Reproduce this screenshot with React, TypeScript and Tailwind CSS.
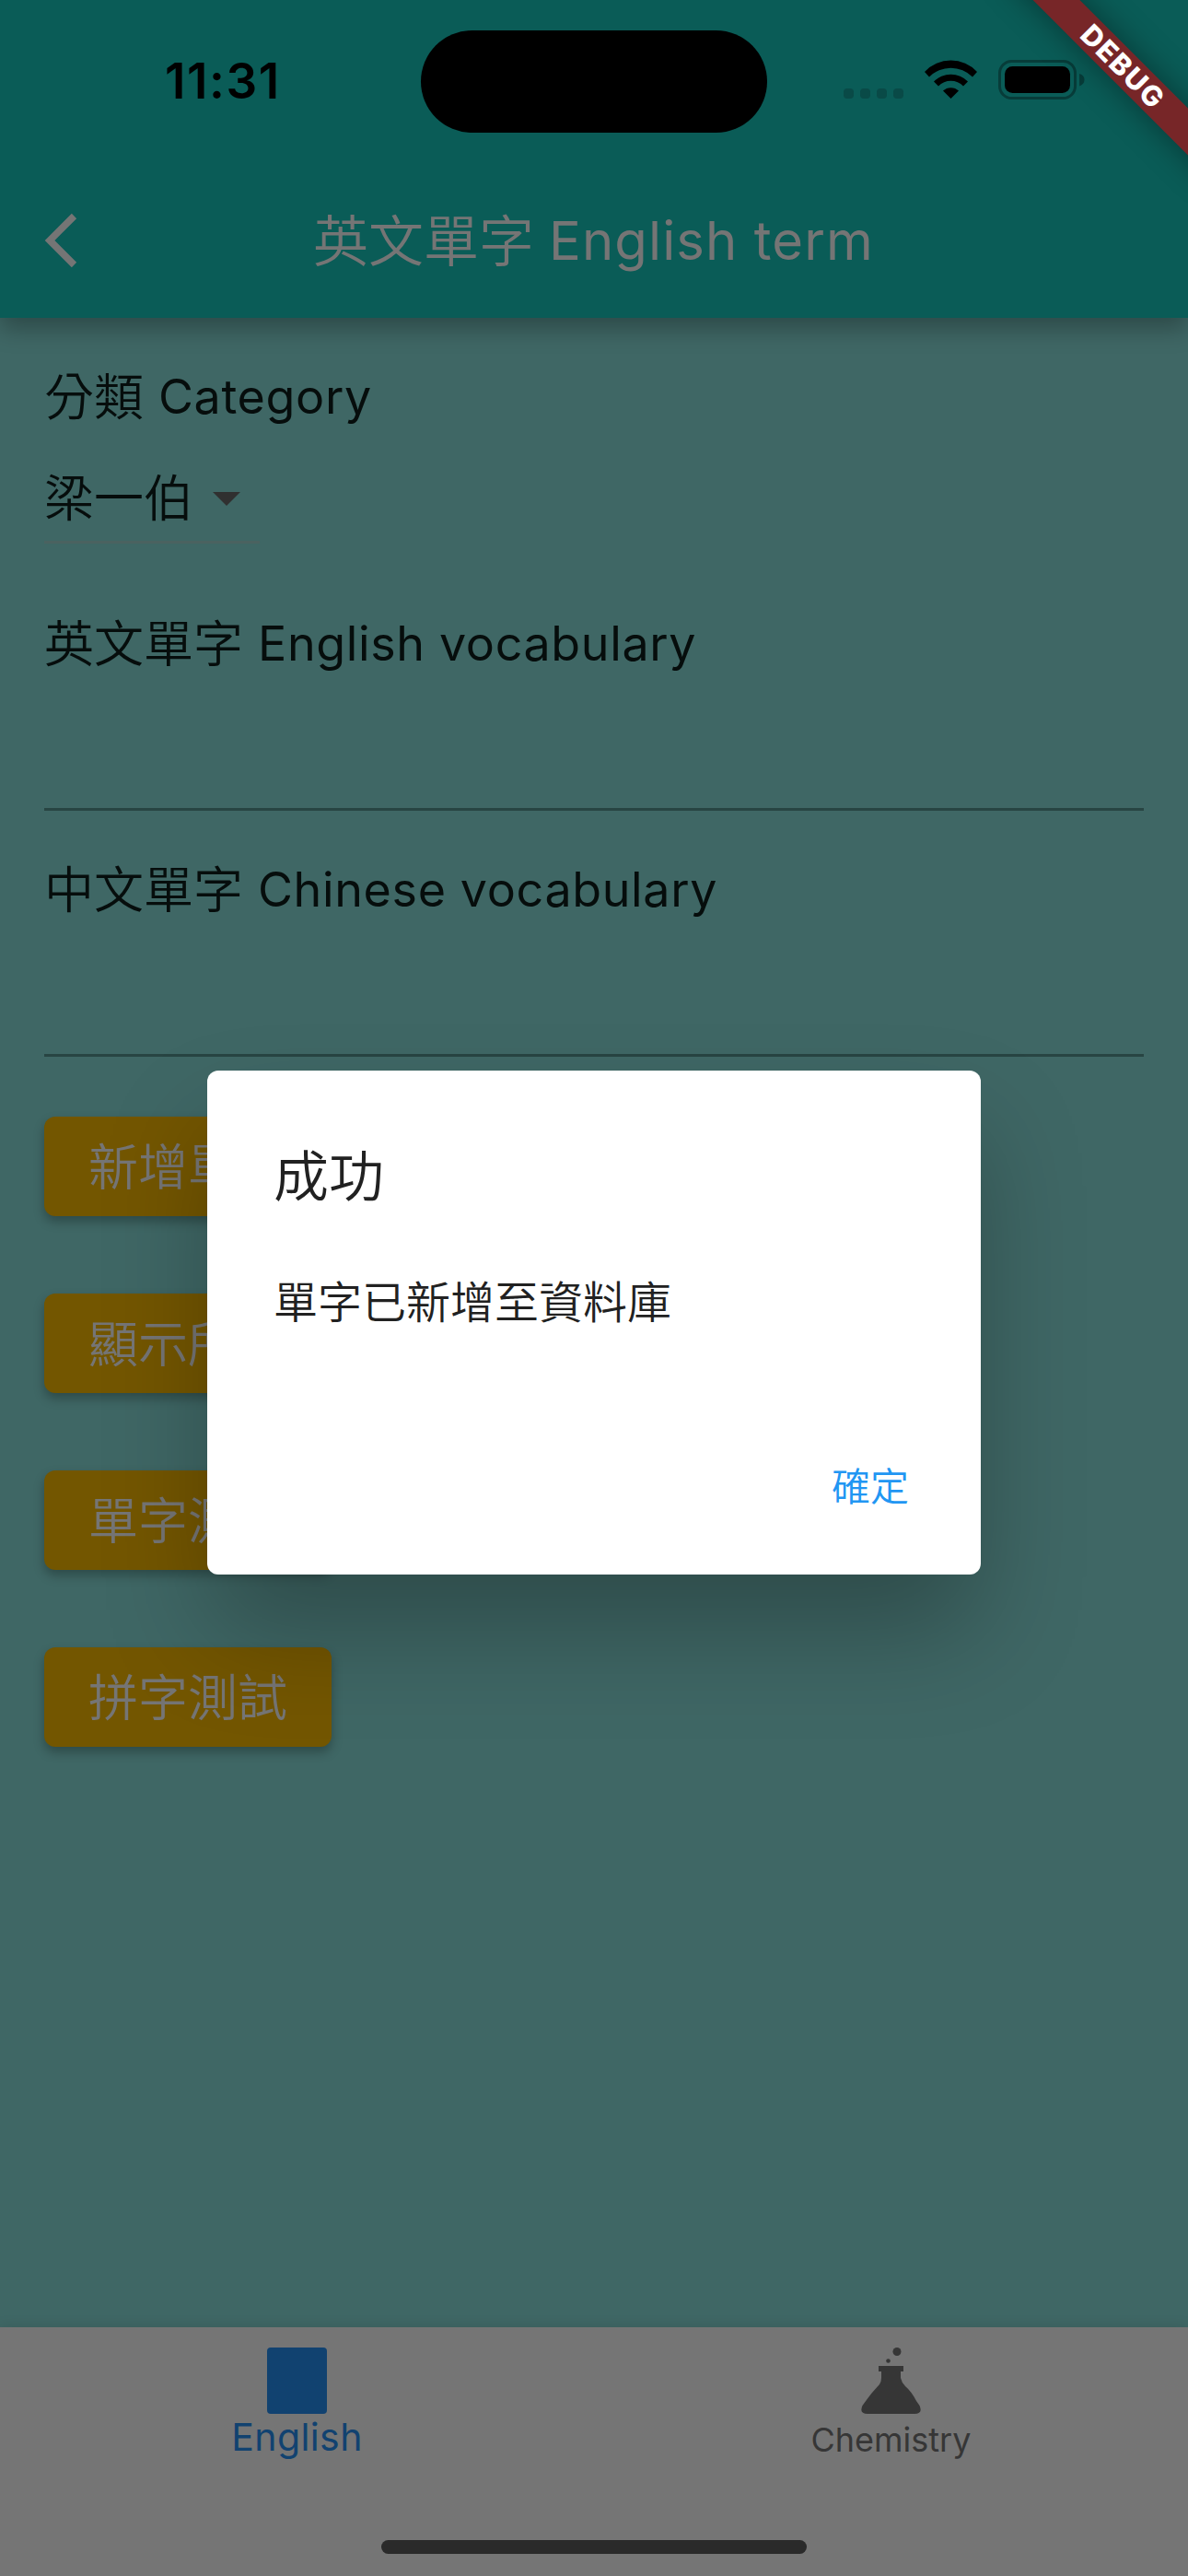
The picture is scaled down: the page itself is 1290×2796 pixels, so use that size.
import type { ReactNode } from "react";

function En({ children, className = "" }: { children: ReactNode; className?: string }) {
  return <span className={`font-['Inter'] font-[370] ${className}`}>{children}</span>;
}

function Zh({ children }: { children: ReactNode }) {
  return <span className="pb-[7px]">{children}</span>;
}

function StatusBar() {
  return (
    <div className="relative h-[177px] shrink-0">
      <span className="absolute left-[179px] top-[56px] font-['Inter'] text-[53px] font-semibold leading-[65px] tracking-[1.6px] text-black">11:31</span>
      <div className="absolute left-[457px] top-[33px] h-[111px] w-[376px] rounded-full bg-black" />
      <svg className="absolute left-[910px] top-[60px]" width="280" height="54" viewBox="0 0 280 54">
        <g fill="#094a47">
          <rect x="6" y="36" width="11" height="11" rx="4" />
          <rect x="24" y="36" width="11" height="11" rx="4" />
          <rect x="42" y="36" width="11" height="11" rx="4" />
          <rect x="60" y="36" width="11" height="11" rx="4" />
        </g>
        <path d="M94 18 A39 39 0 0 1 151 18 L146 23.500 A33 33 0 0 0 99 23.500 Z" fill="#000" />
        <path d="M104 28.500 A26 26 0 0 1 141 28.500 L136 33.500 A19 19 0 0 0 109 33.500 Z" fill="#000" />
        <path d="M114 38.500 A12.500 12.500 0 0 1 131 38.500 L122.500 47 Z" fill="#000" />
        <rect x="175.500" y="6.500" width="82" height="40" rx="13" fill="none" stroke="#073c39" strokeWidth="3" />
        <rect x="181" y="12" width="71" height="29" rx="8.500" fill="#000" />
        <path d="M262 20 Q267.500 21.500 267.500 26.500 Q267.500 31.500 262 33.500 Z" fill="#073c39" />
      </svg>
    </div>
  );
}

function DebugBanner() {
  return (
    <div className="absolute right-0 top-0 z-30 h-[230px] w-[260px] overflow-hidden">
      <div className="absolute left-[28px] top-[53px] flex h-[36px] w-[320px] rotate-45 items-center justify-center bg-[#772628] shadow-[0_0_34px_rgba(0,0,0,0.4)]">
        <span className="pl-[4px] font-['Inter'] text-[30.600px] font-extrabold leading-none tracking-[1.600px] text-white">DEBUG</span>
      </div>
    </div>
  );
}

function Field({ zh, en }: { zh: string; en: string }) {
  return (
    <div className="h-[267px] border-b-[3px] border-[#284543] pt-[50px]">
      <div className="flex h-[72px] items-center whitespace-pre">
        <Zh>{zh}</Zh>
        <En className="ml-[16px] text-[52px] tracking-[0.640px]">{en}</En>
      </div>
    </div>
  );
}

const actions = ["新增單字", "顯示所有", "單字測試", "拼字測試"];

export default function App() {
  return (
    <div className="relative flex h-[2796px] w-[1290px] flex-col overflow-hidden bg-[#3f6765] font-['Noto_Sans_CJK_TC',sans-serif] font-[350]">
      <header className="relative z-10 flex h-[345px] shrink-0 flex-col bg-[#0a5c57] shadow-[0_12px_24px_rgba(0,0,0,0.28)]">
        <StatusBar />
        <div className="flex h-[168px] items-center">
          <svg className="ml-[48px]" width="36" height="60" viewBox="0 0 36 60" fill="none" stroke="#757575" strokeWidth="7.500">
            <path d="M32.500 3.500 L6 30 L32.500 56.500" />
          </svg>
          <h1 className="ml-[256px] flex h-[84px] items-center whitespace-pre text-[60px] text-[#757575]">
            <Zh>英文單字</Zh>
            <En className="ml-[16px] text-[58px] tracking-[1.100px]">English term</En>
          </h1>
        </div>
      </header>

      <main className="flex flex-1 flex-col px-[48px] text-[54px] text-[#060d0c]">
        <div className="mt-[50px] flex h-[72px] items-center">
          <Zh>分類</Zh>
          <En className="ml-[16px] text-[52px] tracking-[0.640px]">Category</En>
        </div>
        <div className="mt-[24px] flex h-[99px] w-[234px] items-center border-b-[3px] border-[#4a6260] pt-[4px]">
          <Zh>梁一伯</Zh>
          <svg className="ml-[21px]" width="30" height="15" viewBox="0 0 30 15"><path d="M0 0H30L15 15Z" fill="#303030" /></svg>
        </div>
        <div className="mt-[23px]">
          <Field zh="英文單字" en="English vocabulary" />
          <Field zh="中文單字" en="Chinese vocabulary" />
        </div>
        <div className="mt-[65px] flex flex-col items-start gap-[84px]">
          {actions.map((label) => (
            <button key={label} className="flex h-[108px] w-[312px] items-center justify-center whitespace-nowrap rounded-[12px] bg-[#735600] pb-[5px] text-[54px] text-[#757575] shadow-[0_6px_12px_rgba(0,0,0,0.28)]">
              {label}
            </button>
          ))}
        </div>
      </main>

      <nav className="relative flex h-[270px] shrink-0 bg-[#757575] shadow-[0_-3px_12px_rgba(0,0,0,0.08)]">
        <div className="flex flex-1 flex-col items-center pt-[22px] text-[#114270]">
          <div className="h-[72px] w-[65px] rounded-[4px] bg-[#114270]" />
          <En className="text-[41px] leading-[50px] tracking-[0.400px]">English</En>
        </div>
        <div className="flex flex-1 flex-col items-center pt-[22px] text-[#363636]">
          <svg width="65" height="72" viewBox="0 0 65 72" fill="#363636">
            <circle cx="39" cy="4.500" r="4.500" />
            <circle cx="29.500" cy="14.500" r="2.300" />
            <path d="M19 20H46V26H43V33Q44 38 48 42Q55 48 60 58L63.500 63Q67.500 72 58 72H7Q-2.500 72 1.500 63Q8 54 12 49L20 40Q22 37 22 33V26H19Z" />
          </svg>
          <En className="mt-[6px] text-[36px] leading-[44px]">Chemistry</En>
        </div>
        <div className="absolute left-[414px] top-[231px] h-[15px] w-[462px] rounded-full bg-[#2a2a2a]" />
      </nav>

      <section role="dialog" className="absolute left-[225px] top-[1162px] z-20 flex h-[547px] w-[840px] flex-col rounded-[12px] bg-white px-[72px] text-[#212121] shadow-[0_64px_116px_-6px_rgba(0,0,0,0.27)]">
        <h2 className="mt-[69px] h-[84px] text-[60px] leading-[84px]">成功</h2>
        <p className="mt-[59px] h-[72px] text-[48px] leading-[72px]">單字已新增至資料庫</p>
        <button className="mr-[6px] mt-[135px] h-[60px] self-end text-[42px] leading-[60px] text-[#2196f3]">確定</button>
      </section>
      <DebugBanner />
    </div>
  );
}
